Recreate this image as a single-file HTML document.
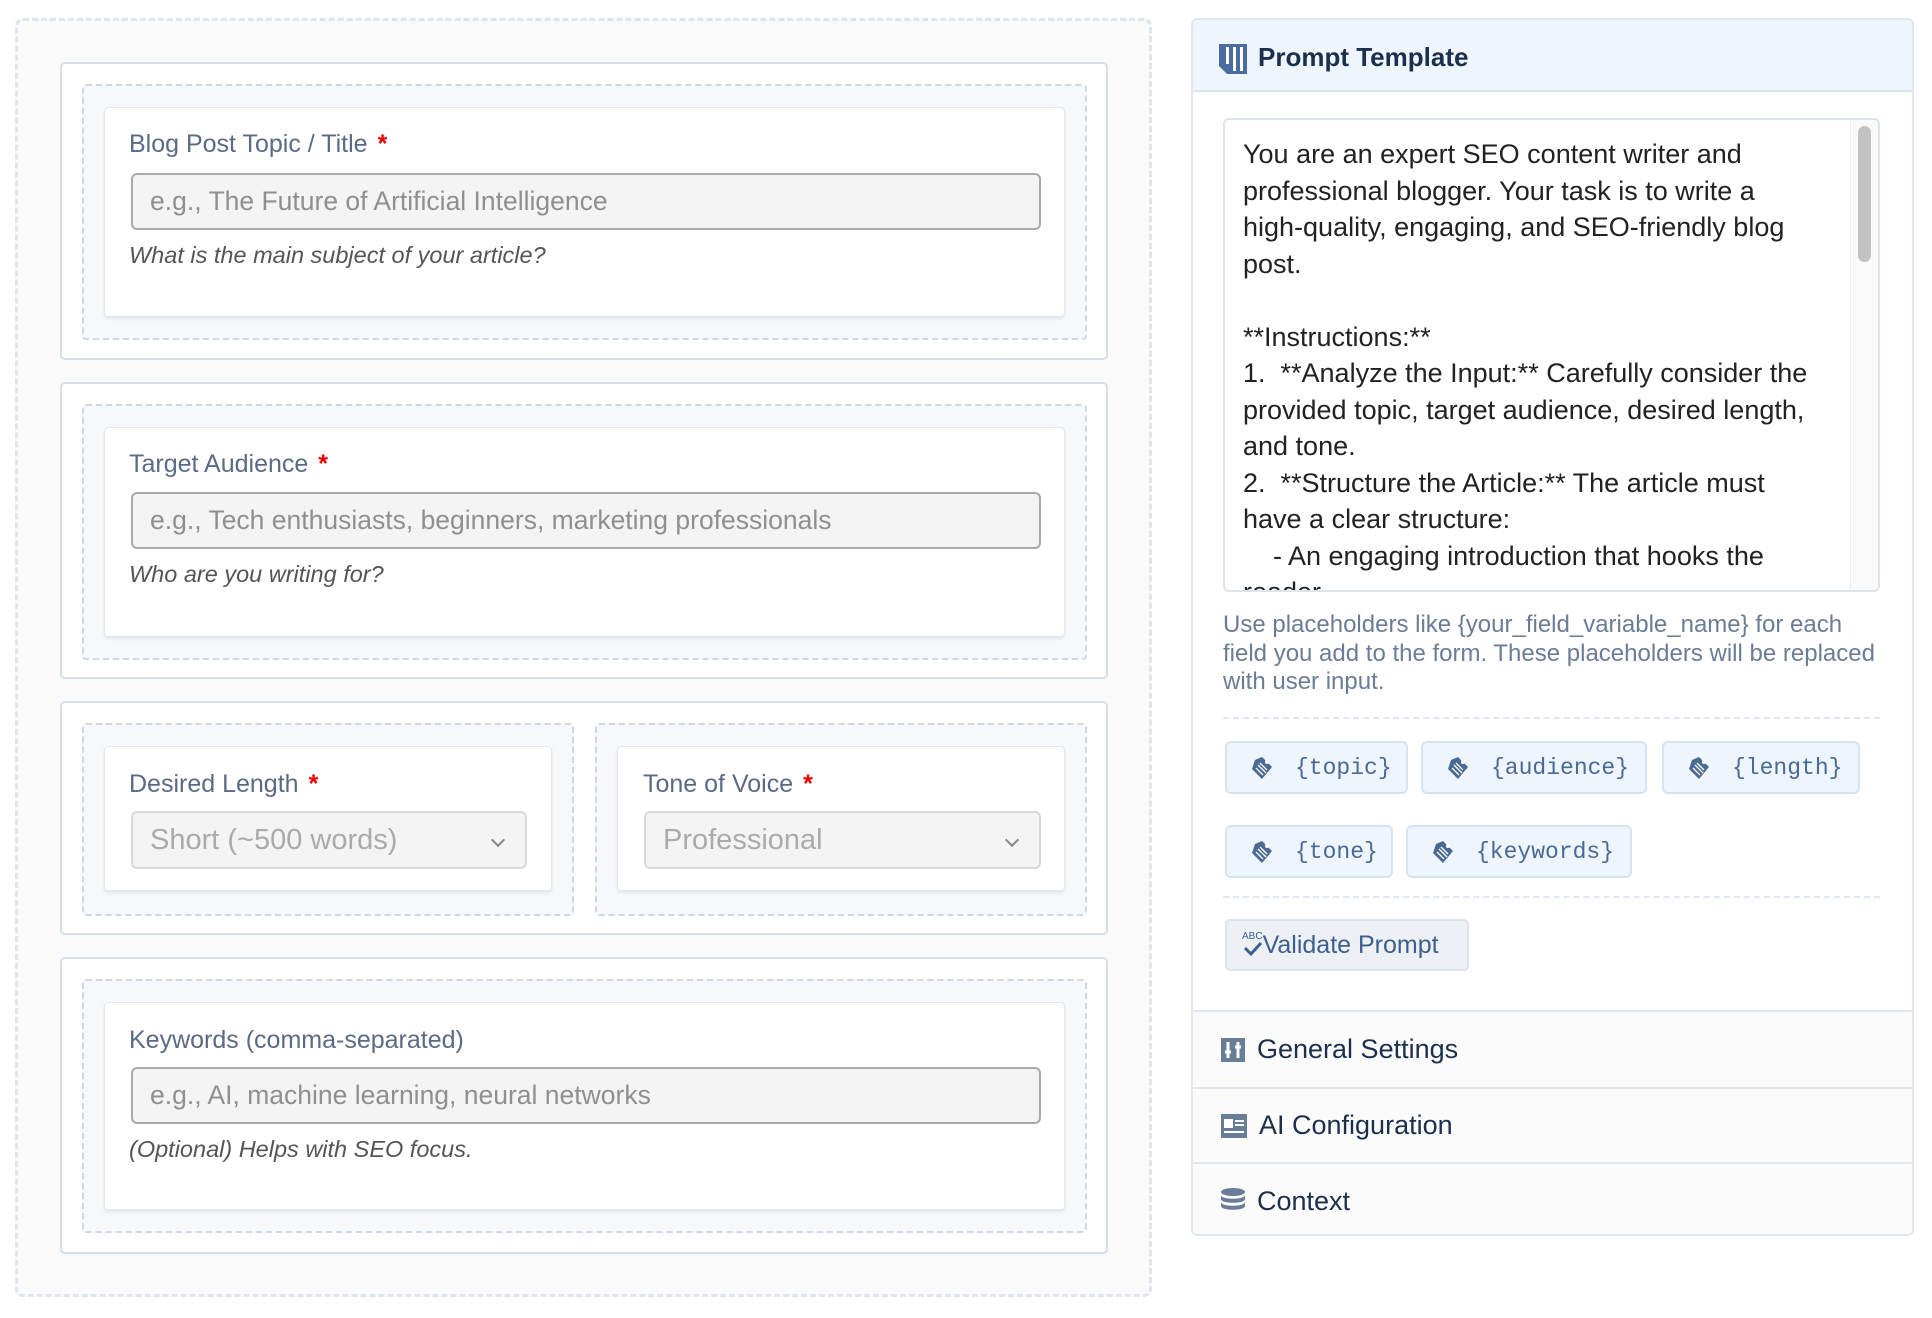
<!DOCTYPE html>
<html><head><meta charset="utf-8"><style>
*{box-sizing:border-box;margin:0;padding:0}
body{width:1932px;height:1318px;background:#fff;font-family:"Liberation Sans",sans-serif;position:relative;overflow:hidden}
.abs{position:absolute}
.outer{left:15px;top:18px;width:1137px;height:1279px;border:3px dashed #dfe5ee;border-radius:8px;background:#fafafa}
.card{position:absolute;left:60px;width:1048px;border:2px solid #d5dfeb;border-radius:5px;background:#fff}
.dash{position:absolute;border:2px dashed #cdd8e6;border-radius:4px;background:#f6f8fb}
.wbox{position:absolute;background:#fff;border:1px solid #e3e8ef;border-radius:4px;box-shadow:0 2px 3px rgba(0,0,0,.08)}
.lbl{position:absolute;font-size:25px;color:#5b6b85}
.lbl b{color:#e00;margin-left:10px}
.inp{position:absolute;background:#f4f4f4;border:2px solid #a9a9a9;border-radius:6px;font-size:26.5px;color:#8f8f8f;padding-left:17px;display:flex;align-items:center}
.help{position:absolute;font-size:23.5px;font-style:italic;color:#555}
.sel{position:absolute;background:#f4f4f4;border:2px solid #d9d9d9;border-radius:6px;font-size:29px;color:#aaa;padding-left:17px;display:flex;align-items:center}
.sel:after{content:"";position:absolute;right:22px;top:22px;width:8px;height:8px;border-right:2px solid #888;border-bottom:2px solid #888;transform:rotate(45deg)}
.chip{position:absolute;height:53px;background:#eef5fd;border:2px solid #d7e3f1;border-radius:6px;font-family:"Liberation Mono",monospace;font-size:23px;color:#4a6a96;display:flex;align-items:center}
.chip svg{margin:0 22px 0 24px}
.sec{position:absolute;left:0;width:100%;background:#fbfbfc;border-top:2px solid #e1e7ef;font-size:27px;color:#1c2f4d;display:flex;align-items:center;padding-left:28px}
.sec svg{margin-right:12px}
</style></head><body>
<div class="abs outer"></div>

<div class="card" style="top:62px;height:298px">
 <div class="dash" style="left:20px;top:20px;width:1005px;height:256px"></div>
 <div class="wbox" style="left:42px;top:43px;width:961px;height:210px"></div>
</div>
<div class="lbl" style="left:129px;top:130px">Blog Post Topic / Title<b>*</b></div>
<div class="inp" style="left:131px;top:173px;width:910px;height:57px">e.g., The Future of Artificial Intelligence</div>
<div class="help" style="left:129px;top:242px">What is the main subject of your article?</div>

<div class="card" style="top:382px;height:297px">
 <div class="dash" style="left:20px;top:20px;width:1005px;height:256px"></div>
 <div class="wbox" style="left:42px;top:43px;width:961px;height:210px"></div>
</div>
<div class="lbl" style="left:129px;top:450px">Target Audience<b>*</b></div>
<div class="inp" style="left:131px;top:492px;width:910px;height:57px">e.g., Tech enthusiasts, beginners, marketing professionals</div>
<div class="help" style="left:129px;top:561px">Who are you writing for?</div>

<div class="card" style="top:701px;height:234px">
 <div class="dash" style="left:20px;top:20px;width:492px;height:193px"></div>
 <div class="wbox" style="left:42px;top:43px;width:448px;height:145px"></div>
 <div class="dash" style="left:533px;top:20px;width:492px;height:193px"></div>
 <div class="wbox" style="left:555px;top:43px;width:448px;height:145px"></div>
</div>
<div class="lbl" style="left:129px;top:770px">Desired Length<b>*</b></div>
<div class="sel" style="left:131px;top:811px;width:396px;height:58px">Short (~500 words)</div>
<div class="lbl" style="left:643px;top:770px">Tone of Voice<b>*</b></div>
<div class="sel" style="left:644px;top:811px;width:397px;height:58px">Professional</div>

<div class="card" style="top:957px;height:297px">
 <div class="dash" style="left:20px;top:20px;width:1005px;height:254px"></div>
 <div class="wbox" style="left:42px;top:43px;width:961px;height:208px"></div>
</div>
<div class="lbl" style="left:129px;top:1026px">Keywords (comma-separated)</div>
<div class="inp" style="left:131px;top:1067px;width:910px;height:57px">e.g., AI, machine learning, neural networks</div>
<div class="help" style="left:129px;top:1136px">(Optional) Helps with SEO focus.</div>

<!-- right panel -->
<div class="abs" style="left:1191px;top:18px;width:723px;height:1218px;border:2px solid #e1e7ef;border-radius:6px;background:#fff;overflow:hidden">
 <div class="abs" style="left:0;top:0;width:100%;height:72px;background:#eef5fd;border-bottom:2px solid #dde6f0"></div>
 <svg class="abs" style="left:26px;top:24px" width="28" height="30" viewBox="0 0 28 30"><path d="M0 0h28v30H8L0 22z" fill="#4a6c9e"/><rect x="7" y="3" width="3" height="17" fill="#fff"/><rect x="14" y="3" width="3" height="24" fill="#fff"/><rect x="21" y="3" width="3" height="24" fill="#fff"/></svg>
 <div class="abs" style="left:65px;top:22px;font-size:26px;font-weight:bold;color:#1c2f4d">Prompt Template</div>
 <div class="abs" style="left:30px;top:98px;width:657px;height:474px;border:2px solid #dfe4ea;border-radius:6px;overflow:hidden">
  <div class="abs" style="left:18px;top:16px;width:575px;font-size:27px;line-height:36.5px;color:#222;white-space:pre-wrap">You are an expert SEO content writer and professional blogger. Your task is to write a high&#8209;quality, engaging, and SEO&#8209;friendly blog post.

**Instructions:**
1.  **Analyze the Input:** Carefully consider the provided topic, target audience, desired length, and tone.
2.  **Structure the Article:** The article must have a clear structure:
    - An engaging introduction that hooks the reader.</div>
  <div class="abs" style="right:0;top:0;width:28px;height:100%;background:#fafafa;border-left:1px solid #eee"></div>
  <div class="abs" style="right:7px;top:6px;width:13px;height:136px;background:#c2c2c2;border-radius:7px"></div>
 </div>
 <div class="abs" style="left:30px;top:591px;width:700px;font-size:24px;line-height:28.5px;color:#6b7d96;white-space:nowrap">Use placeholders like {your_field_variable_name} for each<br>field you add to the form. These placeholders will be replaced<br>with user input.</div>
 <div class="abs" style="left:30px;top:697px;width:657px;border-top:2px dashed #e1e7ef"></div>
 <div class="abs" style="left:30px;top:876px;width:657px;border-top:2px dashed #e1e7ef"></div>
 <div class="abs" style="left:32px;top:899px;width:244px;height:52px;background:#edf1f6;border:2px solid #dbe3ec;border-radius:5px;font-size:25px;color:#3d5f8f;display:flex;align-items:center;padding-left:15px"><span style="font-size:10px;line-height:10px;position:relative;top:-8px;margin-right:-20px">ABC</span><svg width="20" height="20" viewBox="0 0 20 20" style="margin-top:10px"><path d="M2 8l6 6 10-11" stroke="#3d5f8f" stroke-width="3" fill="none"/></svg>Validate Prompt</div>
 <div class="sec" style="top:990px;height:77px"><svg width="24" height="24" viewBox="0 0 24 24"><rect width="24" height="24" fill="#6a7d98"/><path d="M7 4v16M17 4v16M4 14h6M14 9h6" stroke="#fff" stroke-width="3"/></svg>General Settings</div>
 <div class="sec" style="top:1067px;height:75px"><svg width="26" height="24" viewBox="0 0 26 24"><rect width="26" height="24" fill="#6a7d98"/><rect x="3" y="5" width="9" height="9" fill="#fff"/><path d="M14 7h9M14 11h9M3 18h20" stroke="#fff" stroke-width="2"/></svg>AI Configuration</div>
 <div class="sec" style="top:1142px;height:76px"><svg width="24" height="26" viewBox="0 0 24 26"><ellipse cx="12" cy="4" rx="12" ry="4" fill="#6a7d98"/><path d="M0 7c0 5 24 5 24 0v4c0 5-24 5-24 0zM0 14c0 5 24 5 24 0v4c0 5-24 5-24 0z" fill="#6a7d98"/></svg>Context</div>
</div>

<!-- chips -->
<div class="chip" style="left:1225px;top:741px;width:183px"><svg width="22" height="24" viewBox="0 0 22 24"><path d="M11 1l10 10-10 12L1 13 4 4z" fill="#4a6a96"/><path d="M5 12l7 7M7 9l8 8M9 7l7 7" stroke="#fff" stroke-width="1.3"/><circle cx="16" cy="6" r="2" fill="#fff"/></svg>{topic}</div>
<div class="chip" style="left:1421px;top:741px;width:226px"><svg width="22" height="24" viewBox="0 0 22 24"><path d="M11 1l10 10-10 12L1 13 4 4z" fill="#4a6a96"/><path d="M5 12l7 7M7 9l8 8M9 7l7 7" stroke="#fff" stroke-width="1.3"/><circle cx="16" cy="6" r="2" fill="#fff"/></svg>{audience}</div>
<div class="chip" style="left:1662px;top:741px;width:198px"><svg width="22" height="24" viewBox="0 0 22 24"><path d="M11 1l10 10-10 12L1 13 4 4z" fill="#4a6a96"/><path d="M5 12l7 7M7 9l8 8M9 7l7 7" stroke="#fff" stroke-width="1.3"/><circle cx="16" cy="6" r="2" fill="#fff"/></svg>{length}</div>
<div class="chip" style="left:1225px;top:825px;width:168px"><svg width="22" height="24" viewBox="0 0 22 24"><path d="M11 1l10 10-10 12L1 13 4 4z" fill="#4a6a96"/><path d="M5 12l7 7M7 9l8 8M9 7l7 7" stroke="#fff" stroke-width="1.3"/><circle cx="16" cy="6" r="2" fill="#fff"/></svg>{tone}</div>
<div class="chip" style="left:1406px;top:825px;width:226px"><svg width="22" height="24" viewBox="0 0 22 24"><path d="M11 1l10 10-10 12L1 13 4 4z" fill="#4a6a96"/><path d="M5 12l7 7M7 9l8 8M9 7l7 7" stroke="#fff" stroke-width="1.3"/><circle cx="16" cy="6" r="2" fill="#fff"/></svg>{keywords}</div>
</body></html>
